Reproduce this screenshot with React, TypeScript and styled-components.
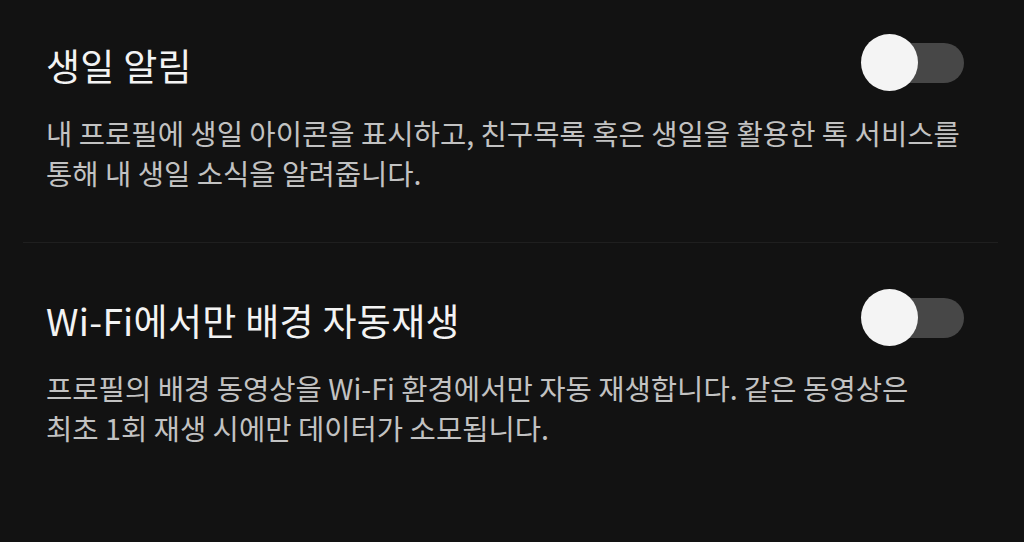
import { useState } from 'react'
import styled, { createGlobalStyle } from 'styled-components'

const GlobalStyle = createGlobalStyle`
  html, body {
    margin: 0;
    padding: 0;
    background: #121212;
  }
  body {
    font-family: "Noto Sans CJK KR", "Noto Sans", sans-serif;
    -webkit-font-smoothing: antialiased;
  }
`

// ─── 페이지 ───
const Page = styled.div`
  width: 1024px;
  height: 542px;
  background: #121212;
  overflow: hidden;
`

// ─── 설정 항목 ───
const Section = styled.section<{ $top: number; $bottom: number }>`
  padding: ${p => p.$top}px 60px ${p => p.$bottom}px 46px;
`

const Row = styled.div`
  display: flex;
  align-items: center;
  justify-content: space-between;
  height: 57px;
`

const Title = styled.h2`
  margin: 0;
  padding-top: 6px;
  font-size: 37px;
  font-weight: 400;
  line-height: 57px;
  color: #f3f3f3;
  letter-spacing: 0.3px;
`

const Desc = styled.p`
  margin: 22px 0 0;
  max-width: 940px;
  font-size: 28.6px;
  font-weight: 400;
  line-height: 40px;
  color: #c2c2c2;
  word-break: keep-all;
`

const Divider = styled.hr`
  margin: 0 26px 0 23px;
  border: none;
  border-top: 1px solid #1f1f1f;
`

// ─── 토글 ───
const Switch = styled.button<{ $on: boolean }>`
  position: relative;
  display: flex;
  align-items: center;
  justify-content: flex-end;
  width: 103px;
  height: 57px;
  padding: 0;
  border: none;
  background: transparent;
  cursor: pointer;
`

const Track = styled.span<{ $on: boolean }>`
  width: 89px;
  height: 40px;
  border-radius: 20px;
  background: ${p => (p.$on ? '#3e7bfa' : '#474747')};
`

const Knob = styled.span<{ $on: boolean }>`
  position: absolute;
  top: 0;
  left: ${p => (p.$on ? '46px' : '0')};
  width: 57px;
  height: 57px;
  border-radius: 50%;
  background: #f4f4f4;
  transition: left 0.2s;
`

interface Item {
  id: string
  title: string
  desc: string
}

const items: Item[] = [
  {
    id: 'birthday',
    title: '생일 알림',
    desc: '내 프로필에 생일 아이콘을 표시하고, 친구목록 혹은 생일을 활용한 톡 서비스를 통해 내 생일 소식을 알려줍니다.',
  },
  {
    id: 'wifi',
    title: 'Wi-Fi에서만 배경 자동재생',
    desc: '프로필의 배경 동영상을 Wi-Fi 환경에서만 자동 재생합니다. 같은 동영상은 최초 1회 재생 시에만 데이터가 소모됩니다.',
  },
]

export default function App() {
  const [on, setOn] = useState<Record<string, boolean>>({})

  const toggle = (id: string) => setOn(prev => ({ ...prev, [id]: !prev[id] }))

  return (
    <Page>
      <GlobalStyle />
      {items.map((it, i) => (
        <div key={it.id}>
          {i > 0 && <Divider />}
          <Section $top={i === 0 ? 34 : 46} $bottom={i === 0 ? 49 : 0}>
            <Row>
              <Title>{it.title}</Title>
              <Switch $on={!!on[it.id]} onClick={() => toggle(it.id)} aria-label={it.title}>
                <Track $on={!!on[it.id]} />
                <Knob $on={!!on[it.id]} />
              </Switch>
            </Row>
            <Desc>{it.desc}</Desc>
          </Section>
        </div>
      ))}
    </Page>
  )
}
